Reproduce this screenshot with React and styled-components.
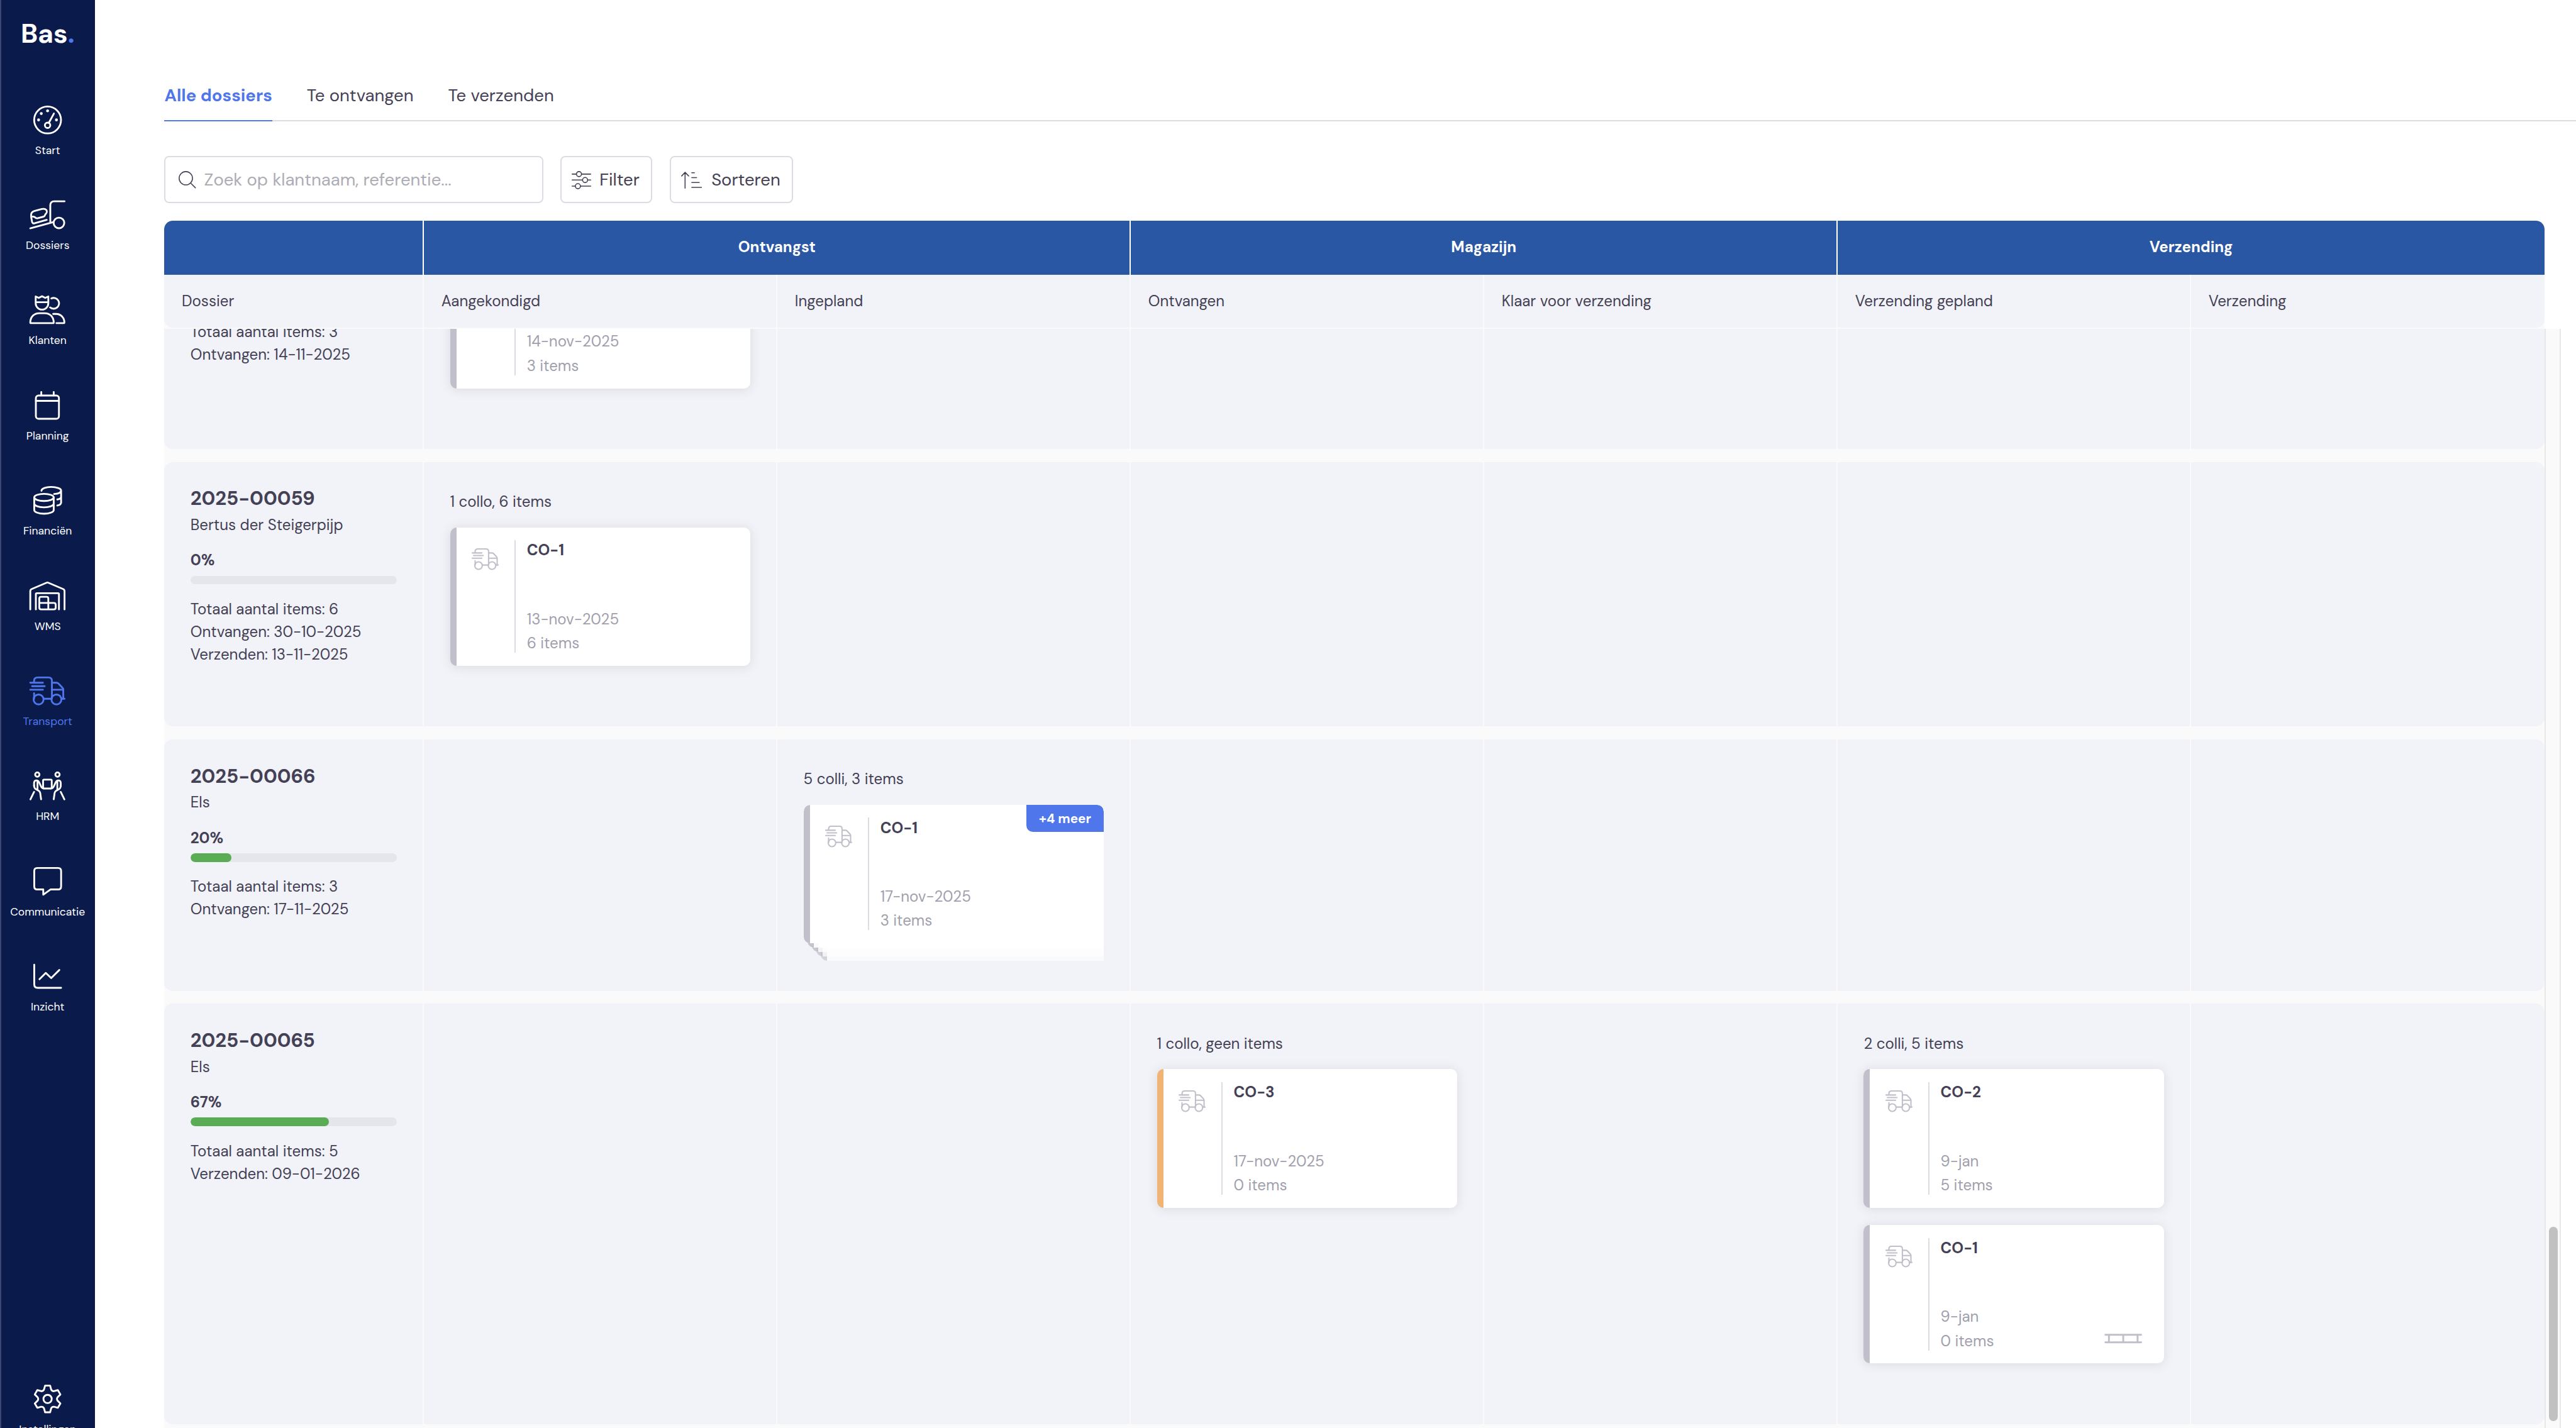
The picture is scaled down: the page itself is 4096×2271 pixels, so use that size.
import React from "react";
import styled, { createGlobalStyle } from "styled-components";

const GlobalStyle = createGlobalStyle`
  *, *::before, *::after {
    box-sizing: border-box;
  }
  html {
    font-size: calc(100vw / 47.62);
  }
  body {
    margin: 0;
    overflow: hidden;
    background: #fff;
    color: #444055;
    font-family: "DM Sans", Inter, "Open Sans", sans-serif;
    font-size: 0.28rem;
    line-height: 0.42rem;
    font-optical-sizing: none;
  }
`;

const Layout = styled.div`
  display: flex;
  height: 100vh;
  overflow: hidden;
`;

/* Sidebar */

const Sidebar = styled.nav`
  flex: none;
  display: flex;
  flex-direction: column;
  width: 1.76rem;
  height: 100vh;
  padding-right: 2px;
  overflow: hidden;
  background: #0a1a4b;
  border-left: 2px solid #3b4770;
`;

const Logo = styled.div`
  height: 1.95rem;
  padding: 0.3rem 0 0 0.36rem;
  color: #fff;
  font-size: 0.495rem;
  font-weight: 700;
  line-height: 0.64rem;
  span {
    color: #4f76eb;
  }
`;

const NavItem = styled.div`
  display: flex;
  flex: none;
  flex-direction: column;
  align-items: center;
  gap: 0.155rem;
  height: 1.76rem;
  margin-top: ${({ $bottom }) => ($bottom ? "auto" : "0")};
  margin-bottom: ${({ $bottom }) => ($bottom ? "-0.96rem" : "0")};
  color: ${({ $active }) => ($active ? "#4f76eb" : "#fff")};
  font-size: 0.204rem;
  line-height: 0.3rem;
`;

const NavIcon = styled.svg`
  width: 0.66rem;
  height: 0.53rem;
  flex: none;
  overflow: visible;
  fill: none;
  stroke: currentColor;
  stroke-width: 10;
  stroke-linecap: round;
  stroke-linejoin: round;
`;

/* Top part of the page */

const Main = styled.main`
  flex: 1;
  min-width: 0;
  display: flex;
  flex-direction: column;
  padding: 1.52rem 0 0 1.28rem;
`;

const Tabs = styled.div`
  display: flex;
  flex: none;
  gap: 0.64rem;
  height: 0.72rem;
  box-shadow: inset 0 -2px 0 #dddce4;
`;

const Tab = styled.div`
  color: ${({ $active }) => ($active ? "#4f76eb" : "inherit")};
  font-size: 0.32rem;
  font-weight: ${({ $active }) => ($active ? 700 : 400)};
  line-height: 0.5rem;
  box-shadow: ${({ $active }) => ($active ? "inset 0 -2px 0 #4f76eb" : "none")};
`;

const Toolbar = styled.div`
  display: flex;
  flex: none;
  gap: 0.32rem;
  height: 0.88rem;
  margin: 0.64rem 0 0.32rem;
`;

const Control = styled.div`
  display: flex;
  align-items: center;
  width: ${({ $width }) => $width};
  padding-top: 0.015rem;
  padding-left: ${({ $pad }) => $pad};
  gap: ${({ $gap }) => $gap};
  border: 2px solid #dddce4;
  border-radius: 0.09rem;
  background: #fff;
  font-size: 0.32rem;
  white-space: nowrap;
`;

const Placeholder = styled.span`
  color: #adacb5;
`;

const ToolIcon = styled.svg`
  width: ${({ $w }) => $w}rem;
  height: ${({ $h }) => $h}rem;
  flex: none;
  overflow: visible;
  fill: none;
  stroke: #444055;
  stroke-width: 5.5;
  stroke-linecap: round;
  stroke-linejoin: round;
`;

/* Board */

const COLUMNS = "4.8rem repeat(6, 1fr)";

const Board = styled.div`
  flex: 1;
  min-height: 0;
  display: flex;
  flex-direction: column;
`;

const GroupRow = styled.div`
  display: grid;
  flex: none;
  grid-template-columns: 4.8rem repeat(3, 1fr);
  width: 44rem;
  height: 1rem;
  overflow: hidden;
  border-radius: 0.16rem 0.16rem 0 0;
  background: #2957a4;
  color: #fff;
  font-weight: 700;
  line-height: 0.985rem;
  text-align: center;
`;

const GroupCell = styled.div`
  border-right: 2px solid #fff;
  &:last-child {
    border-right: 0;
  }
`;

const HeadWrap = styled.div`
  flex: none;
  width: 44rem;
  height: 1rem;
  background: #fafafa;
`;

const HeadRow = styled.div`
  display: grid;
  grid-template-columns: ${COLUMNS};
  height: 0.98rem;
  overflow: hidden;
  border-radius: 0 0 0.16rem 0.16rem;
  background: #f1f3f8;
  line-height: 0.98rem;
`;

const HeadCell = styled.div`
  padding-left: 0.32rem;
  border-right: 2px solid #fafafa;
  &:last-child {
    border-right: 0;
  }
`;

const Scroller = styled.div`
  flex: 1;
  min-height: 0;
  display: flex;
  overflow: hidden;
`;

const Rows = styled.div`
  display: flex;
  flex: none;
  flex-direction: column;
  gap: 0.24rem;
  width: 44rem;
  margin-top: -2.67rem;
  background: #fafafa;
`;

const Row = styled.div`
  display: grid;
  flex: none;
  grid-template-columns: ${COLUMNS};
  height: ${({ $height }) => $height}rem;
  border-radius: 0.16rem;
  background: #f1f3f8;
`;

const DossierCell = styled.div`
  padding: ${({ $scrolled }) => ($scrolled ? "2.515rem" : "0.418rem")} 0.48rem 0;
  border-right: 2px solid #fafafa;
`;

const DossierTitle = styled.div`
  font-size: 0.36rem;
  font-weight: 700;
  line-height: 0.54rem;
`;

const Percentage = styled.div`
  margin: 0.237rem 0 0.07rem;
  font-weight: 700;
`;

const Progress = styled.div`
  width: 3.82rem;
  height: 0.16rem;
  margin-bottom: 0.25rem;
  overflow: hidden;
  border-radius: 0.08rem;
  background: #e5e6eb;
`;

const ProgressFill = styled.div`
  height: 100%;
  border-radius: 0.08rem;
  background: #5bad55;
`;

const Cell = styled.div`
  min-width: 0;
  padding: 0.53rem 0.48rem 0;
  border-right: 2px solid #fafafa;
  &:last-child {
    border-right: 0;
  }
`;

const Cards = styled.div`
  display: flex;
  flex-direction: column;
  gap: 0.32rem;
  margin-top: ${({ $scrolled }) => ($scrolled ? "0.68rem" : "0.26rem")};
`;

const CardBox = styled.div`
  position: relative;
  display: flex;
  height: 2.56rem;
  padding: 0.24rem 0 0.2rem 0.28rem;
  border-left: 0.12rem solid ${({ $color }) => $color || "#c1bfca"};
  border-radius: 0.12rem;
  background: #fff;
  box-shadow: ${({ $flat }) => ($flat ? "none" : "0 0.02rem 0.2rem rgba(70, 66, 85, 0.13)")};
`;

const Stack = styled.div`
  position: relative;
  height: 2.88rem;
  overflow: hidden;
  border-radius: 0.12rem 0.12rem 0 0;
`;

const StackLayer = styled.div`
  position: absolute;
  top: ${({ $step }) => $step * 0.08}rem;
  left: ${({ $step }) => $step * 0.08}rem;
  width: 100%;
  height: 2.56rem;
  border-left: 0.12rem solid #c1bfca;
  border-radius: 0.12rem;
  background: #fff;
  opacity: ${({ $step }) => 1 - $step * 0.1};
`;

const MoreBadge = styled.div`
  position: absolute;
  top: 0;
  right: 0;
  width: 1.43rem;
  height: 0.5rem;
  border-radius: 0 0.12rem 0 0.12rem;
  background: #4f76eb;
  color: #fff;
  font-size: 0.24rem;
  font-weight: 700;
  line-height: 0.52rem;
  text-align: center;
`;

const TruckIcon = styled.svg`
  width: 0.5rem;
  height: 0.4rem;
  flex: none;
  margin: 0.145rem 0.3rem 0 0;
  overflow: visible;
  fill: none;
  stroke: #c1bfca;
  stroke-width: 9.5;
  stroke-linecap: round;
  stroke-linejoin: round;
`;

const CardBody = styled.div`
  display: flex;
  flex-direction: column;
  margin: 0.014rem 0 -0.014rem;
  color: #a19fae;
  line-height: 0.448rem;
`;

const CardTitle = styled.div`
  margin-bottom: auto;
  color: #444055;
  font-weight: 700;
  line-height: 0.35rem;
`;

const Divider = styled.div`
  flex: none;
  width: 2px;
  height: 2.08rem;
  margin-right: 0.2rem;
  background: #dddce4;
`;

const LadderIcon = styled.svg`
  width: 0.7rem;
  height: 0.18rem;
  align-self: flex-end;
  margin: 0 0.4rem 0.17rem auto;
  fill: none;
  stroke: #c1bfca;
  stroke-width: 3.4;
  stroke-linecap: round;
`;

const Scrollbar = styled.div`
  width: 0.3rem;
  margin-top: -1px;
  padding-top: 16.6rem;
  border: solid #e8e8e8;
  border-width: 1px 2px 0;
  background: #fafafa;
`;

const Thumb = styled.div`
  width: 0.16rem;
  height: 3.6rem;
  margin-left: 0.06rem;
  border-radius: 0.08rem;
  background: #c1c1c1;
`;

const TRUCK = (
  <>
    <path d="M25 32V24Q25 5 45 5H105Q124 5 124 24V122" />
    <path d="M4 34H74M14 53H84M4 73H74M25 92V124M78 123H121M177 123H194" />
    <path d="M124 34H148Q156 34 161 39L181 60Q187 66 187 73V122M124 73H187" />
    <circle cx="50" cy="127" r="27.5" />
    <circle cx="149" cy="127" r="27.5" />
  </>
);

const MOVER = (
  <>
    <circle cx="43" cy="17" r="12" />
    <path d="M25 80V64C25 46 46 44 53 60L64 83Q69 93 79 94" />
    <path d="M25 78C25 100 40 98 52 108Q58 113 59 119L64 154M44 54V98M25 113L5 154" />
  </>
);

const NAV = [
  {
    label: "Start",
    icon: (
      <>
        <circle cx="100" cy="79.5" r="74.5" />
        <circle cx="100" cy="109" r="15" />
        <path d="M107 95L135 44" />
        <g fill="currentColor" stroke="none">
          <circle cx="50" cy="79" r="8" />
          <circle cx="65" cy="44" r="8" />
          <circle cx="100" cy="29" r="8" />
          <circle cx="149" cy="79" r="8" />
        </g>
      </>
    ),
  },
  {
    label: "Dossiers",
    icon: (
      <>
        <path d="M194 4H135A20 20 0 0 0 115 24V118M4 154L133 119" />
        <circle cx="163" cy="124" r="29.5" />
        <path d="M9 90C6 72 12 62 26 58L68 47C84 43 95 49 96 60C97 68 92 71 89 75C84 80 86 87 78 89L44 98C34 100 32 92 26 90C20 88 12 88 9 92L14 118Q17 129 27 126L95 107" />
      </>
    ),
  },
  {
    label: "Klanten",
    icon: (
      <>
        <path d="M34 5L51 13L69 4L87 13L104 5V43A35 35 0 0 1 34 43ZM34 37H104" />
        <path d="M4 149C4 118 26 98 54 98H84C112 98 134 118 134 149Q134 153 130 153H8Q4 153 4 149Z" />
        <path d="M121 16A30 30 0 1 1 114 66M131 102H147C174 102 193 124 193 148Q193 153 189 153H149" />
      </>
    ),
  },
  {
    label: "Planning",
    icon: (
      <>
        <rect x="35" y="24.5" width="128" height="129" rx="15" />
        <path d="M35 54H163M65 5V24M134 5V24" />
      </>
    ),
  },
  {
    label: "Financiën",
    icon: (
      <>
        <ellipse cx="80" cy="63" rx="54" ry="20" />
        <path d="M26 63V133C26 144 50 153.500 80 153.500S134 144 134 133V63M26 98C26 109 50 118 80 118S134 109 134 98" />
        <path d="M66 26C66 14 90 5 120 5S175 14 175 25C175 36 158 43 136 44M175 25V92C175 100 166 106 154 108M175 60C175 67 166 72 154 74" />
      </>
    ),
  },
  {
    label: "WMS",
    icon: (
      <>
        <path d="M4 154V54Q4 44 12 41L94 6Q99 4 104 6L186 41Q194 44 194 54V154" />
        <path d="M35 154V69Q35 64 40 64H158Q163 64 163 69V154" />
        <path d="M54 118V94Q54 84 64 84H94Q104 84 104 94V154M54 118H135Q145 118 145 128V144Q145 154 135 154H64Q54 154 54 144Z" />
      </>
    ),
  },
  { label: "Transport", active: true, icon: TRUCK },
  {
    label: "HRM",
    icon: (
      <>
        {MOVER}
        <g transform="translate(198 0) scale(-1 1)">{MOVER}</g>
        <rect x="75" y="45" width="48" height="49" rx="5" />
      </>
    ),
  },
  {
    label: "Communicatie",
    icon: (
      <path d="M43 5H158Q175 5 175 22V107Q175 124 158 124H116L76 153V124H43Q26 124 26 107V22Q26 5 43 5Z" />
    ),
  },
  {
    label: "Inzicht",
    icon: <path d="M26 15V124Q26 143 45 143H175M55 95L90 60L120 89L165 44" />,
  },
];

const GEAR = (
  <g transform="translate(100 79.5)">
    <path d="M-14 -74H14L20 -52Q24 -43 35 -43L57 -49L71 -25L55 -9Q49 0 55 9L71 25L57 49L35 43Q24 43 20 52L14 74H-14L-20 52Q-24 43 -35 43L-57 49L-71 25L-55 9Q-49 0 -55 -9L-71 -25L-57 -49L-35 -43Q-24 -43 -20 -52Z" />
    <circle r="23" />
  </g>
);

const HEADERS = [
  "Dossier",
  "Aangekondigd",
  "Ingepland",
  "Ontvangen",
  "Klaar voor verzending",
  "Verzending gepland",
  "Verzending",
];

// the first dossier is scrolled half under the header
const DOSSIERS = [
  {
    scrolled: true,
    height: 4.89,
    lines: ["Totaal aantal items: 3", "Ontvangen: 14-11-2025"],
    cells: {
      0: { cards: [{ date: "14-nov-2025", items: "3 items" }] },
    },
  },
  {
    id: "2025-00059",
    client: "Bertus der Steigerpijp",
    progress: 0,
    height: 4.89,
    lines: ["Totaal aantal items: 6", "Ontvangen: 30-10-2025", "Verzenden: 13-11-2025"],
    cells: {
      0: {
        summary: "1 collo, 6 items",
        cards: [{ name: "CO-1", date: "13-nov-2025", items: "6 items" }],
      },
    },
  },
  {
    id: "2025-00066",
    client: "Els",
    progress: 20,
    height: 4.65,
    lines: ["Totaal aantal items: 3", "Ontvangen: 17-11-2025"],
    cells: {
      1: {
        summary: "5 colli, 3 items",
        cards: [{ name: "CO-1", date: "17-nov-2025", items: "3 items", more: 4 }],
      },
    },
  },
  {
    id: "2025-00065",
    client: "Els",
    progress: 67,
    height: 7.77,
    lines: ["Totaal aantal items: 5", "Verzenden: 09-01-2026"],
    cells: {
      2: {
        summary: "1 collo, geen items",
        cards: [{ name: "CO-3", date: "17-nov-2025", items: "0 items", color: "#f0b474" }],
      },
      4: {
        summary: "2 colli, 5 items",
        cards: [
          { name: "CO-2", date: "9-jan", items: "5 items" },
          { name: "CO-1", date: "9-jan", items: "0 items", ladder: true },
        ],
      },
    },
  },
];

const Card = ({ name, date, items, color, more, ladder }) => {
  const card = (
    <CardBox $color={color} $flat={Boolean(more)}>
      <TruckIcon viewBox="0 0 198 159">{TRUCK}</TruckIcon>
      <Divider />
      <CardBody>
        <CardTitle>{name}</CardTitle>
        <div>{date}</div>
        <div>{items}</div>
      </CardBody>
      {ladder && (
        <LadderIcon viewBox="0 0 70 18">
          <path d="M2 2H68M2 16H68M8.500 2V16M35 2V16M61.500 2V16" />
        </LadderIcon>
      )}
      {more && <MoreBadge>+{more} meer</MoreBadge>}
    </CardBox>
  );

  if (!more) return card;
  return (
    <Stack>
      {[4, 3, 2, 1].map((step) => (
        <StackLayer key={step} $step={step} />
      ))}
      {card}
    </Stack>
  );
};

const Dossier = ({ dossier }) => (
  <Row $height={dossier.height}>
    <DossierCell $scrolled={dossier.scrolled}>
      {!dossier.scrolled && (
        <>
          <DossierTitle>{dossier.id}</DossierTitle>
          <div>{dossier.client}</div>
          <Percentage>{dossier.progress}%</Percentage>
          <Progress>
            <ProgressFill style={{ width: `${dossier.progress}%` }} />
          </Progress>
        </>
      )}
      {dossier.lines.map((line) => (
        <div key={line}>{line}</div>
      ))}
    </DossierCell>
    {[0, 1, 2, 3, 4, 5].map((column) => {
      const cell = dossier.cells[column];
      return (
        <Cell key={column}>
          {cell && (
            <>
              {cell.summary && <div>{cell.summary}</div>}
              <Cards $scrolled={dossier.scrolled}>
                {cell.cards.map((card, i) => (
                  <Card key={i} {...card} />
                ))}
              </Cards>
            </>
          )}
        </Cell>
      );
    })}
  </Row>
);

export default function App() {
  return (
    <Layout>
      <GlobalStyle />
      <Sidebar>
        <Logo>
          Bas<span>.</span>
        </Logo>
        {NAV.map((item) => (
          <NavItem key={item.label} $active={item.active}>
            <NavIcon viewBox="0 0 198 159">{item.icon}</NavIcon>
            {item.label}
          </NavItem>
        ))}
        <NavItem $bottom>
          <NavIcon viewBox="0 0 198 159">{GEAR}</NavIcon>
          Instellingen
        </NavItem>
      </Sidebar>
      <Main>
        <Tabs>
          <Tab $active>Alle dossiers</Tab>
          <Tab>Te ontvangen</Tab>
          <Tab>Te verzenden</Tab>
        </Tabs>
        <Toolbar>
          <Control $width="7rem" $pad="0.24rem" $gap="0.15rem">
            <ToolIcon viewBox="0 0 96 96" $w={0.32} $h={0.32}>
              <path d="M68 68L93 93" />
              <circle cx="40" cy="40" r="37" />
            </ToolIcon>
            <Placeholder>Zoek op klantnaam, referentie...</Placeholder>
          </Control>
          <Control $width="1.7rem" $pad="0.18rem" $gap="0.16rem">
            <ToolIcon viewBox="0 0 107 102" $w={0.36} $h={0.34}>
              <path d="M2 17H26M54 17H105M2 50H60M88 50H105M2 84H20M48 84H105" />
              <circle cx="40" cy="17" r="14" />
              <circle cx="74" cy="50" r="14" />
              <circle cx="34" cy="84" r="14" />
            </ToolIcon>
            Filter
          </Control>
          <Control $width="2.28rem" $pad="0.19rem" $gap="0.175rem">
            <ToolIcon viewBox="0 0 115 94" $w={0.383} $h={0.313}>
              <path d="M22 4V92M3 24L22 4L42 24M59 6H74M59 33H86M59 60H101M59 87H113" />
            </ToolIcon>
            Sorteren
          </Control>
        </Toolbar>
        <Board>
          <GroupRow>
            <GroupCell />
            <GroupCell>Ontvangst</GroupCell>
            <GroupCell>Magazijn</GroupCell>
            <GroupCell>Verzending</GroupCell>
          </GroupRow>
          <HeadWrap>
            <HeadRow>
              {HEADERS.map((header) => (
                <HeadCell key={header}>{header}</HeadCell>
              ))}
            </HeadRow>
          </HeadWrap>
          <Scroller>
            <Rows>
              {DOSSIERS.map((dossier, i) => (
                <Dossier key={i} dossier={dossier} />
              ))}
            </Rows>
            <Scrollbar>
              <Thumb />
            </Scrollbar>
          </Scroller>
        </Board>
      </Main>
    </Layout>
  );
}
